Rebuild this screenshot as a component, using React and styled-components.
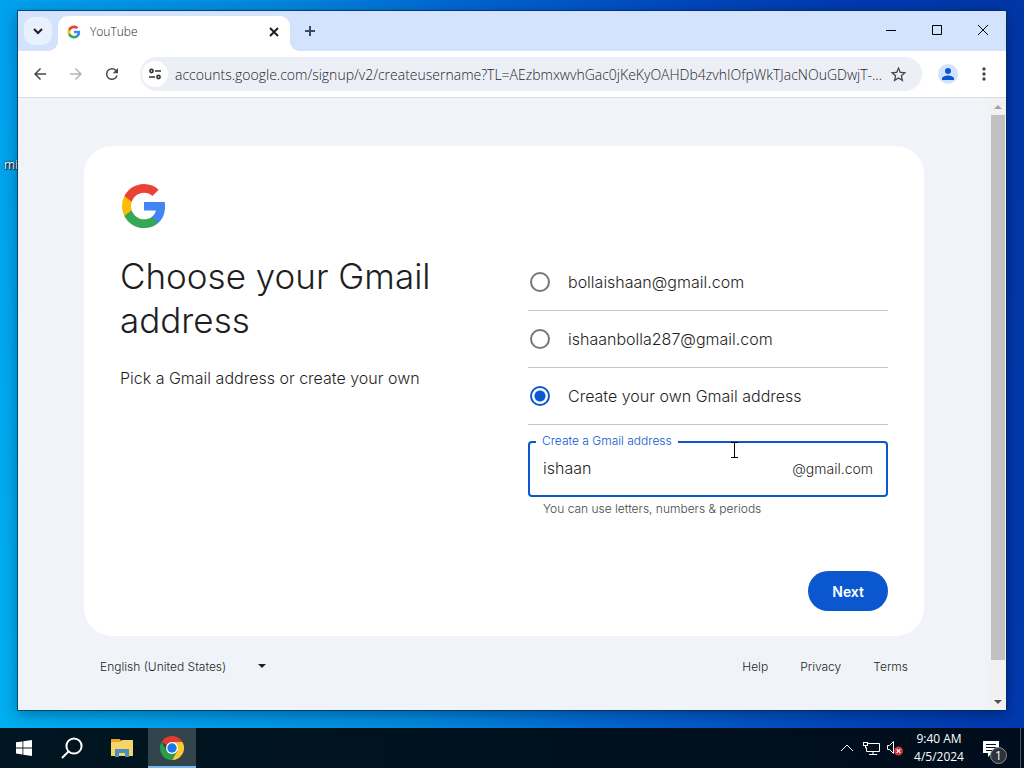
import React, { useState } from 'react';
import styled, { createGlobalStyle, css } from 'styled-components';

const GlobalStyle = createGlobalStyle`
  * {
    box-sizing: border-box;
  }

  body {
    margin: 0;
    font-family: Inter, 'Liberation Sans', sans-serif;
    color: #1f1f1f;
  }

  button, input, select {
    font-family: inherit;
    color: inherit;
    border: none;
    background: none;
    padding: 0;
    margin: 0;
  }
`;

const uiFont = css`
  font-family: 'Open Sans', 'Noto Sans', sans-serif;
`;

/* desktop */

const Screen = styled.div`
  min-height: 100vh;
  display: flex;
  flex-direction: column;
`;

const Desktop = styled.main`
  position: relative;
  flex: 1;
  display: flex;
  padding: 11px 18px 18px;
  background: linear-gradient(78deg, #00aff0 0%, #00a0ee 14%, #0088de 36%, #0062d0 54%, #0046ba 72%, #0039b0 86%, #0036a6 100%);
`;

const IconLabel = styled.span`
  ${uiFont}
  position: absolute;
  left: 4px;
  top: 157px;
  font-size: 12px;
  line-height: 16px;
  color: #fff;
  text-shadow: 1px 1px 1px #000, 0 0 2px #000;
`;

const Window = styled.section`
  position: relative;
  flex: 1;
  display: flex;
  flex-direction: column;
  background: #fff;
  outline: 1px solid rgba(0, 40, 90, 0.7);
  box-shadow: 0 4px 14px rgba(0, 0, 0, 0.35);
`;

/* browser */

const TabStrip = styled.header`
  ${uiFont}
  display: flex;
  align-items: flex-end;
  height: 40px;
  padding-left: 6px;
  background: #d3e3fd;
`;

const TabSearch = styled.button`
  display: flex;
  align-items: center;
  justify-content: center;
  width: 28px;
  height: 28px;
  margin: 0 6px 6px 0;
  border-radius: 10px;
  background: #e9f1fe;
`;

const Tab = styled.div`
  position: relative;
  display: flex;
  align-items: center;
  width: 232px;
  height: 35px;
  padding: 0 8px 4px 9px;
  border-radius: 10px 10px 0 0;
  background: #fff;
  font-size: 12px;
  font-weight: 300;

  &::before,
  &::after {
    content: '';
    position: absolute;
    bottom: 0;
    width: 10px;
    height: 10px;
  }

  &::before {
    right: 100%;
    background: radial-gradient(circle at 0 0, transparent 10px, #fff 10px);
  }

  &::after {
    left: 100%;
    background: radial-gradient(circle at 100% 0, transparent 10px, #fff 10px);
  }
`;

const TabTitle = styled.span`
  flex: 1;
  padding-left: 9px;
`;

const StripButton = styled.button`
  display: flex;
  align-items: center;
  justify-content: center;
  width: ${props => props.$width || 16}px;
  height: ${props => props.$height || 16}px;
`;

const WindowButtons = styled.div`
  display: flex;
  align-self: flex-start;
  margin-left: auto;
`;

const Toolbar = styled.div`
  ${uiFont}
  display: flex;
  align-items: center;
  height: 47px;
  padding: 0 4px;
  border-bottom: 1px solid #dadce0;
`;

const ToolButton = styled.button`
  display: flex;
  align-items: center;
  justify-content: center;
  width: ${props => props.$width || 36}px;
  height: 32px;
`;

const AddressBar = styled.div`
  flex: 1;
  min-width: 0;
  display: flex;
  align-items: center;
  height: 34px;
  margin: 0 8px 0 10px;
  padding: 0 12px 0 2px;
  border-radius: 17px;
  background: #edeff7;
`;

const SiteInfo = styled.button`
  display: flex;
  align-items: center;
  justify-content: center;
  width: 26px;
  height: 26px;
  border-radius: 50%;
  background: #fff;
`;

const Address = styled.input`
  flex: 1;
  min-width: 0;
  margin-left: 7px;
  font-size: 14px;
  font-weight: 300;
  color: #1f1f1f;
  outline: none;
`;

const Avatar = styled.span`
  display: flex;
  align-items: center;
  justify-content: center;
  width: 20px;
  height: 20px;
  border-radius: 50%;
  background: #d3e3fd;
`;

const Viewport = styled.div`
  flex: 1;
  display: flex;
  background: #f0f4f9;
`;

const Scrollbar = styled.div`
  display: flex;
  flex-direction: column;
  align-items: center;
  width: 16px;
  background: #f1f1f1;
`;

const ScrollArrow = styled.span`
  display: flex;
  align-items: center;
  justify-content: center;
  height: 17px;
`;

const ScrollThumb = styled.div`
  flex: 33;
  width: 14px;
  background: #c1c1c1;
`;

const ScrollRest = styled.div`
  flex: 2;
`;

/* page */

const Page = styled.div`
  flex: 1;
  display: flex;
  flex-direction: column;
  align-items: center;
  padding: 48px 24px 24px;
`;

const Card = styled.form`
  width: 100%;
  max-width: 840px;
  padding: 36px 36px 25px;
  border-radius: 28px;
  background: #fff;
`;

const Columns = styled.div`
  display: grid;
  grid-template-columns: 1fr 1fr;
  gap: 48px;
  margin-top: 24px;
`;

const Title = styled.h1`
  margin: 0;
  font-size: 35px;
  font-weight: 300;
  line-height: 44px;
`;

const Subtitle = styled.p`
  margin: 24px 0 0;
  font-size: 16px;
  font-weight: 300;
  line-height: 24px;
`;

const Option = styled.label`
  display: flex;
  align-items: center;
  gap: 18px;
  height: 57px;
  padding-left: 2px;
  border-bottom: 1px solid #c4c7c5;
  font-size: 16px;
  font-weight: 300;
`;

const Radio = styled.input`
  appearance: none;
  width: 20px;
  height: 20px;
  border: 2px solid #747775;
  border-radius: 50%;

  &:checked {
    border-color: #0b57d0;
    background: radial-gradient(circle, #0b57d0 5px, transparent 6px);
  }
`;

const Field = styled.div`
  position: relative;
  display: flex;
  align-items: center;
  height: 56px;
  margin-top: 16px;
  padding: 0 13px 2px;
  border: 2px solid #0b57d0;
  border-radius: 4px;
`;

const FieldLabel = styled.label`
  position: absolute;
  left: 6px;
  top: -10px;
  padding: 0 6px;
  background: #fff;
  font-size: 12px;
  font-weight: 300;
  line-height: 16px;
  color: #0b57d0;
`;

const FieldInput = styled.input`
  flex: 1;
  min-width: 0;
  font-size: 16px;
  font-weight: 300;
  outline: none;
`;

const Suffix = styled.span`
  font-size: 14px;
  font-weight: 300;
`;

const Hint = styled.p`
  margin: 4px 0 0 15px;
  font-size: 12px;
  font-weight: 300;
  line-height: 16px;
  color: #444746;
`;

const Actions = styled.div`
  display: flex;
  justify-content: flex-end;
  margin-top: 54px;
`;

const NextButton = styled.button`
  height: 40px;
  padding: 0 24px;
  border-radius: 20px;
  background: #0b57d0;
  color: #fff;
  font-size: 14px;
  font-weight: 600;
`;

const Footer = styled.footer`
  display: flex;
  align-items: center;
  width: 100%;
  max-width: 840px;
  padding: 22px 16px 0;
  font-size: 12px;
  font-weight: 300;
`;

const Language = styled.div`
  position: relative;
  display: flex;
  align-items: center;
  margin-right: auto;

  svg {
    position: absolute;
    right: 4px;
    pointer-events: none;
  }
`;

const LanguageSelect = styled.select`
  appearance: none;
  width: 170px;
  height: 16px;
  font-size: 12px;
  font-weight: 300;
`;

const FooterLink = styled.a`
  margin-left: 32px;
  color: #1f1f1f;
  text-decoration: none;
`;

/* taskbar */

const Taskbar = styled.nav`
  ${uiFont}
  display: flex;
  align-items: center;
  height: 40px;
  background: linear-gradient(90deg, #001620, #000d1c);
  color: #fff;
`;

const TaskButton = styled.button`
  display: flex;
  align-items: center;
  justify-content: center;
  width: 48px;
  height: 40px;
  ${props => props.$active && css`
    background: #33444d;
    box-shadow: inset 0 -2px #76b9ed;
  `}
`;

const PinnedApps = styled.div`
  display: flex;
  margin-left: 2px;
  gap: 2px;
`;

const Tray = styled.div`
  display: flex;
  align-items: center;
  height: 40px;
  margin-left: auto;
`;

const TrayButton = styled.button`
  display: flex;
  align-items: center;
  justify-content: center;
  width: 24px;
  height: 40px;
`;

const Clock = styled.div`
  width: 64px;
  text-align: center;
  font-size: 12px;
  line-height: 18px;
`;

const Notifications = styled.button`
  position: relative;
  display: flex;
  align-items: center;
  justify-content: center;
  width: 40px;
  height: 40px;
`;

const Badge = styled.span`
  position: absolute;
  right: 4px;
  top: 19px;
  width: 17px;
  height: 17px;
  border: 1px solid #8b9096;
  border-radius: 50%;
  background: #2c333c;
  font-size: 12px;
  line-height: 15px;
  text-align: center;
`;

const ShowDesktop = styled.button`
  width: 4px;
  height: 40px;
  margin-left: 9px;
  border-left: 1px solid #4a5563;
`;

const Pointer = styled.svg`
  position: absolute;
  left: 729px;
  top: 442px;
  z-index: 2;
  pointer-events: none;
`;

/* drawings */

const GoogleLogo = ({ size }) => (
  <svg width={size} height={size} viewBox="0 0 48 48">
    <path fill="#4285F4" d="M45.12 24.5c0-1.56-.14-3.06-.4-4.5H24v8.51h11.84c-.51 2.75-2.06 5.08-4.39 6.64v5.52h7.11c4.16-3.83 6.56-9.47 6.56-16.17z" />
    <path fill="#34A853" d="M24 46c5.94 0 10.92-1.97 14.56-5.33l-7.11-5.52c-1.97 1.32-4.49 2.1-7.45 2.1-5.73 0-10.58-3.87-12.31-9.07H4.34v5.7C7.96 41.07 15.4 46 24 46z" />
    <path fill="#FBBC04" d="M11.69 28.18C11.25 26.86 11 25.45 11 24s.25-2.86.69-4.18v-5.7H4.34A21.99 21.99 0 0 0 2 24c0 3.55.85 6.91 2.34 9.88l7.35-5.7z" />
    <path fill="#EA4335" d="M24 10.75c3.23 0 6.13 1.11 8.41 3.29l6.31-6.31C34.91 4.18 29.93 2 24 2 15.4 2 7.96 6.93 4.34 14.12l7.35 5.7c1.73-5.2 6.58-9.07 12.31-9.07z" />
  </svg>
);

const Brand = styled.div`
  display: flex;
`;

// 24px material shapes share this wrapper
const Glyph = ({ d, size = 20, color = '#474747' }) => (
  <svg width={size} height={size} viewBox="0 0 24 24" fill={color}>
    <path d={d} />
  </svg>
);

const BACK = 'M20 11H7.83l5.59-5.59L12 4l-8 8 8 8 1.41-1.41L7.83 13H20v-2z';
const FORWARD = 'M12 4l-1.41 1.41L16.17 11H4v2h12.17l-5.58 5.59L12 20l8-8z';
const RELOAD = 'M17.65 6.35A7.96 7.96 0 0 0 12 4a8 8 0 1 0 7.73 10h-2.08A6 6 0 1 1 12 6c1.66 0 3.14.69 4.22 1.78L13 11h7V4l-2.35 2.35z';
const STAR = 'M22 9.24l-7.19-.62L12 2 9.19 8.63 2 9.24l5.46 4.73L5.82 21 12 17.27 18.18 21l-1.63-7.03L22 9.24zM12 15.4l-3.76 2.27 1-4.28-3.32-2.88 4.38-.38L12 6.1l1.71 4.04 4.38.38-3.32 2.88 1 4.28L12 15.4z';
const PERSON = 'M12 12a4 4 0 1 0 0-8 4 4 0 0 0 0 8zm0 2c-2.67 0-8 1.34-8 4v2h16v-2c0-2.66-5.33-4-8-4z';
const MORE = 'M12 8a2 2 0 1 0 0-4 2 2 0 0 0 0 4zm0 2a2 2 0 1 0 0 4 2 2 0 0 0 0-4zm0 6a2 2 0 1 0 0 4 2 2 0 0 0 0-4z';

const Line = ({ d, size = 12, color = '#1f1f1f', width = 1 }) => (
  <svg width={size} height={size} viewBox={`0 0 ${size} ${size}`} fill="none" stroke={color} strokeWidth={width}>
    <path d={d} />
  </svg>
);

const TuneIcon = () => (
  <svg width="14" height="12" viewBox="0 0 14 12" fill="none" stroke="#333" strokeWidth="1.6">
    <circle cx="3.5" cy="3" r="1.6" />
    <path d="M7 3h6M1 9h6" />
    <circle cx="10.5" cy="9" r="1.6" />
  </svg>
);

const WindowsIcon = () => (
  <svg width="16" height="16" viewBox="0 0 16 16" fill="#fff">
    <path d="M0 2.3l6.5-.9v6.1H0zM7.3 1.3L16 0v7.5H7.3zM0 8.4h6.5v6.1L0 13.6zM7.3 8.4H16V16l-8.7-1.3z" />
  </svg>
);

const ExplorerIcon = () => (
  <svg width="22" height="20" viewBox="0 0 22 20">
    <path fill="#e0a82e" d="M0 1h9l1 2h12v4H0z" />
    <path fill="#f8d468" d="M0 4h9l2-2h11v16H0z" />
    <path fill="#4a8fc0" d="M4 11h14v8h-4v-4H8v4H4z" />
  </svg>
);

const ChromeIcon = () => (
  <svg width="24" height="24" viewBox="0 0 24 24">
    <path fill="#e33b2e" d="M12 12L1.6 6a12 12 0 0 1 20.8 0z" />
    <path fill="#fcc934" d="M12 6h10.4A12 12 0 0 1 12 24l5.2-9z" />
    <path fill="#2a9d4a" d="M1.6 6l5.2 9 5.2 3 5.2-3L12 24A12 12 0 0 1 1.6 6z" />
    <circle cx="12" cy="12" r="6" fill="#fff" />
    <circle cx="12" cy="12" r="4.7" fill="#1f74e8" />
  </svg>
);

const NetworkIcon = () => (
  <svg width="17" height="15" viewBox="0 0 17 15" fill="none" stroke="#fff">
    <path d="M4.5 2.5h12v8H3.5v-4M10 11v3M6 13.5h8" />
    <rect x="0.5" y="1.5" width="4" height="3" />
    <path d="M2.5 5v2h1" />
  </svg>
);

const MutedIcon = () => (
  <svg width="18" height="16" viewBox="0 0 18 16" fill="none" stroke="#fff">
    <path d="M1.5 5.5h2l4-4v12l-4-4h-2z" />
    <circle cx="12.5" cy="11" r="4.5" fill="#d13438" stroke="none" />
    <path d="M10.7 9.2l3.6 3.6M14.3 9.2l-3.6 3.6" strokeWidth="1.2" />
  </svg>
);

const NoteIcon = () => (
  <svg width="16" height="17" viewBox="0 0 16 17">
    <path fill="#fff" d="M0 1h16v12h-7l-4 4v-4H0z" />
    <path stroke="#0a1420" d="M3 4.5h10M3 7.5h10M3 10.5h6" />
  </svg>
);

const Triangle = ({ up, color }) => (
  <svg width="8" height="4" viewBox="0 0 8 4" fill={color}>
    <path d={up ? 'M0 4l4-4 4 4z' : 'M0 0h8L4 4z'} />
  </svg>
);

const options = [
  { value: 'bollaishaan', text: 'bollaishaan@gmail.com' },
  { value: 'ishaanbolla287', text: 'ishaanbolla287@gmail.com' },
  { value: 'custom', text: 'Create your own Gmail address' }
];

function App() {
  const [selected, setSelected] = useState('custom');
  const [username, setUsername] = useState('ishaan');
  const [url, setUrl] = useState(
    'accounts.google.com/signup/v2/createusername?TL=AEzbmxwvhGac0jKeKyOAHDb4zvhIOfpWkTJacNOuGDwjT-...'
  );

  return (
    <Screen>
      <GlobalStyle />
      <Desktop>
        <IconLabel>mi</IconLabel>
        <Window>
          <TabStrip>
            <TabSearch aria-label="Search tabs">
              <Line d="M2 4l4 4 4-4" width={2} />
            </TabSearch>
            <Tab>
              <GoogleLogo size={14} />
              <TabTitle>YouTube</TabTitle>
              <StripButton aria-label="Close tab">
                <Line d="M2 2l8 8M10 2l-8 8" width={2} />
              </StripButton>
            </Tab>
            <StripButton aria-label="New tab" $width={40} $height={40}>
              <Line d="M6 1v10M1 6h10" color="#3c4a5c" width={2} />
            </StripButton>
            <WindowButtons>
              <StripButton aria-label="Minimize" $width={46} $height={38}>
                <Line d="M1 6.5h10" color="#000" />
              </StripButton>
              <StripButton aria-label="Maximize" $width={46} $height={38}>
                <Line d="M1.5 1.5h9v9h-9z" color="#000" />
              </StripButton>
              <StripButton aria-label="Close" $width={46} $height={38}>
                <Line d="M1 1l10 10M11 1L1 11" color="#000" />
              </StripButton>
            </WindowButtons>
          </TabStrip>
          <Toolbar>
            <ToolButton aria-label="Back"><Glyph d={BACK} size={18} /></ToolButton>
            <ToolButton aria-label="Forward"><Glyph d={FORWARD} size={18} color="#b4b4b4" /></ToolButton>
            <ToolButton aria-label="Reload"><Glyph d={RELOAD} size={18} /></ToolButton>
            <AddressBar>
              <SiteInfo aria-label="Site information"><TuneIcon /></SiteInfo>
              <Address aria-label="Address" value={url} onChange={e => setUrl(e.target.value)} />
              <ToolButton aria-label="Bookmark" $width={24}><Glyph d={STAR} size={19} /></ToolButton>
            </AddressBar>
            <ToolButton aria-label="Profile">
              <Avatar><Glyph d={PERSON} size={18} color="#0b57d0" /></Avatar>
            </ToolButton>
            <ToolButton aria-label="Menu"><Glyph d={MORE} /></ToolButton>
          </Toolbar>
          <Viewport>
            <Page>
              <Card onSubmit={e => e.preventDefault()}>
                <Brand><GoogleLogo size={48} /></Brand>
                <Columns>
                  <div>
                    <Title>Choose your Gmail address</Title>
                    <Subtitle>Pick a Gmail address or create your own</Subtitle>
                  </div>
                  <div>
                    {options.map(option =>
                      <Option key={option.value}>
                        <Radio
                          type="radio"
                          name="address"
                          checked={selected === option.value}
                          onChange={() => setSelected(option.value)}
                        />
                        {option.text}
                      </Option>
                    )}
                    <Field>
                      <FieldLabel htmlFor="username">Create a Gmail address</FieldLabel>
                      <FieldInput id="username" value={username} onChange={e => setUsername(e.target.value)} />
                      <Suffix>@gmail.com</Suffix>
                    </Field>
                    <Hint>You can use letters, numbers &amp; periods</Hint>
                  </div>
                </Columns>
                <Actions>
                  <NextButton type="submit">Next</NextButton>
                </Actions>
              </Card>
              <Footer>
                <Language>
                  <LanguageSelect aria-label="Language">
                    <option>English (United States)</option>
                  </LanguageSelect>
                  <Triangle color="#1f1f1f" />
                </Language>
                <FooterLink href="#help">Help</FooterLink>
                <FooterLink href="#privacy">Privacy</FooterLink>
                <FooterLink href="#terms">Terms</FooterLink>
              </Footer>
            </Page>
            <Scrollbar>
              <ScrollArrow><Triangle up color="#a3a3a3" /></ScrollArrow>
              <ScrollThumb />
              <ScrollRest />
              <ScrollArrow><Triangle color="#505050" /></ScrollArrow>
            </Scrollbar>
          </Viewport>
        </Window>
        <Pointer width="10" height="16" viewBox="0 0 10 16" fill="none" stroke="#000">
          <path d="M5.5 1v14M2 15.5h7M2 .5h7" />
        </Pointer>
      </Desktop>
      <Taskbar>
        <TaskButton aria-label="Start"><WindowsIcon /></TaskButton>
        <TaskButton aria-label="Search">
          <svg width="22" height="22" viewBox="0 0 22 22" fill="none" stroke="#fff" strokeWidth="2">
            <circle cx="13" cy="9" r="7.6" />
            <path d="M7.5 14.5L1 21" />
          </svg>
        </TaskButton>
        <PinnedApps>
          <TaskButton aria-label="File Explorer"><ExplorerIcon /></TaskButton>
          <TaskButton aria-label="Chrome" $active><ChromeIcon /></TaskButton>
        </PinnedApps>
        <Tray>
          <TrayButton aria-label="Hidden icons"><Line d="M0 9l6-6 6 6" color="#fff" /></TrayButton>
          <TrayButton aria-label="Network"><NetworkIcon /></TrayButton>
          <TrayButton aria-label="Volume"><MutedIcon /></TrayButton>
          <Clock>9:40 AM<br />4/5/2024</Clock>
          <Notifications aria-label="Notifications">
            <NoteIcon />
            <Badge>1</Badge>
          </Notifications>
          <ShowDesktop aria-label="Show desktop" />
        </Tray>
      </Taskbar>
    </Screen>
  );
}

export default App;
